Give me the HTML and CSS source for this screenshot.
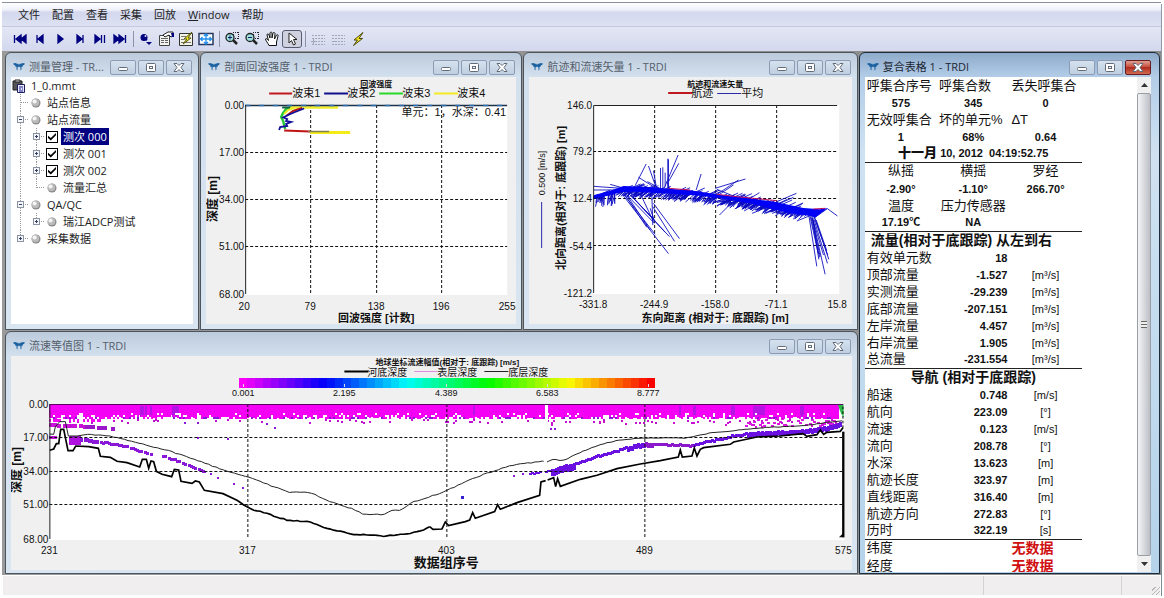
FILE: index.html
```
<!DOCTYPE html>
<html lang="zh-CN">
<head>
<meta charset="utf-8">
<title>1_0.mmt - TRDI</title>
<link rel="stylesheet" href="styles.css">
</head>
<body>
<svg class="defs" aria-hidden="true">
  <defs>
    <clipPath id="plot-clip"><rect x="11" y="-100" width="740" height="560"/></clipPath>
    <symbol id="logo" viewBox="0 0 12 10"><path d="M0 1.500L2.500 1 4.500 2 5 1.200 5.500 2.500H6.500L7 1.200 7.500 2 9.500 1 12 1.500 11 3 10 3.200 9.500 4.700 8.500 4.800V7.500L7.500 8.500V5.500L6 4.500 4.500 5.500V8.500L3.500 7.500V4.800L2.500 4.700 2 3.200 1 3Z" fill="#1c62a0"/></symbol>
    <symbol id="ball" viewBox="0 0 10 10"><circle cx="5" cy="5" r="4.500" fill="#8a8a8a"/><circle cx="4.500" cy="4.500" r="3.800" fill="#bbb"/><circle cx="3.600" cy="3.600" r="2" fill="#f4f4f4"/></symbol>
    <symbol id="tee" viewBox="0 0 16 17"><path d="M8.500 0V17M9 8.500H16" class="dots"/></symbol>
    <symbol id="ell" viewBox="0 0 16 17"><path d="M8.500 0V9M9 8.500H16" class="dots"/></symbol>
    <symbol id="bar" viewBox="0 0 16 17"><path d="M8.500 0V17" class="dots"/></symbol>
    <symbol id="plus" viewBox="0 0 16 17"><path d="M8.500 0V17M9 8.500H16" class="dots"/><rect x="5.500" y="5.500" width="6" height="6" fill="#f4f6fa" stroke="#8b93a0"/><path d="M7 8.500h3M8.500 7v3" stroke="#33416a"/></symbol>
    <symbol id="plusend" viewBox="0 0 16 17"><path d="M8.500 0V9M9 8.500H16" class="dots"/><rect x="5.500" y="5.500" width="6" height="6" fill="#f4f6fa" stroke="#8b93a0"/><path d="M7 8.500h3M8.500 7v3" stroke="#33416a"/></symbol>
    <symbol id="minus" viewBox="0 0 16 17"><path d="M8.500 0V17M9 8.500H16" class="dots"/><rect x="5.500" y="5.500" width="6" height="6" fill="#f4f6fa" stroke="#8b93a0"/><path d="M7 8.500h3" stroke="#33416a"/></symbol>
    <symbol id="wmin" viewBox="0 0 12 9"><rect x="1.500" y="4.500" width="9" height="3" rx="1" fill="#fff" stroke="#626b78"/></symbol>
    <symbol id="wmax" viewBox="0 0 12 9"><rect x="1.500" y=".5" width="9" height="8" rx="1" fill="#fff" stroke="#626b78"/><rect x="4.500" y="3.500" width="3" height="2" fill="#fff" stroke="#626b78"/></symbol>
    <symbol id="wclose" viewBox="0 0 12 9"><path d="M1 .5H4L6 2.500 8 .5H11L8 4.500 11 8.500H8L6 6.500 4 8.500H1L4 4.500Z" fill="#fff" stroke="#626b78"/></symbol>
    <symbol id="mag" viewBox="0 0 16 16"><path d="M9 1.500h6M9 7.500h6M9.500 1v6M14.500 1v7" stroke="#222" stroke-dasharray="1 1" fill="none"/><path d="M9 9l4 4" stroke="#222" stroke-width="2.500"/><circle cx="6" cy="6.500" r="4" fill="#9fe0dc" stroke="#222" stroke-width="1.300"/></symbol>
    <symbol id="bolt" viewBox="0 0 16 16"><path d="M13 1.500L4 9H7.500L3.500 14.500 12.500 7.500H9Z" fill="#ffee20" stroke="#4a4a10"/></symbol>
  </defs>
</svg>
<div class="app">
  <nav class="menu">
    <button>文件</button><button>配置</button><button>查看</button><button>采集</button><button>回放</button><button><u>W</u>indow</button><button>帮助</button>
  </nav>
  <div class="tools">
    <button aria-label="首组"><svg viewBox="0 0 16 16"><path d="M2.500 4v8M9 4L4 8l5 4ZM14 4L9 8l5 4Z" class="navy"/></svg></button>
    <button aria-label="上一组"><svg viewBox="0 0 16 16"><path d="M5 4v8M11 4L6 8l5 4Z" class="navy"/></svg></button>
    <button aria-label="播放"><svg viewBox="0 0 16 16"><path d="M6 4l5 4-5 4Z" class="navy"/></svg></button>
    <button aria-label="下一组"><svg viewBox="0 0 16 16"><path d="M11 4v8M5 4l5 4-5 4Z" class="navy"/></svg></button>
    <button aria-label="暂停"><svg viewBox="0 0 16 16"><path d="M3 4l5 4-5 4ZM9.500 4v8M12.500 4v8" class="navy"/></svg></button>
    <button aria-label="末组"><svg viewBox="0 0 16 16"><path d="M13.500 4v8M2 4l5 4-5 4ZM7 4l5 4-5 4Z" class="navy"/></svg></button>
    <i class="sep"></i>
    <button aria-label="标记"><svg viewBox="0 0 16 16"><circle cx="6" cy="6.500" r="3.500" fill="#000080"/><path d="M6 7l3 2" stroke="#000080" stroke-width="2"/><path d="M8 11h6l-3 3Z" fill="#000080"/><circle cx="7.500" cy="5" r="1" fill="#dfe4f5"/></svg></button>
    <button aria-label="属性"><svg viewBox="0 0 16 16"><path d="M1.500 4.500h10v10h-10Z" fill="#f2f2ee" stroke="#444"/><path d="M3 7.500h7M3 9.500h3m1 0h3M3 11.500h3m1 0h3" stroke="#666"/><path d="M5 4l5-3h5v4l-2 1-2-2-4 2Z" fill="#fff" stroke="#222"/><path d="M13 2h3v4h-2Z" fill="#000080"/></svg></button>
    <button aria-label="重新处理"><svg viewBox="0 0 16 16"><path d="M1.500 2.500h13v12h-13Z" fill="#f4f4e6" stroke="#333"/><path d="M3 5.500h5M3 8.500h3M3 11.500h10" stroke="#777"/><path d="M14 1L6 8h3L5 13l8-6h-3Z" fill="#ffee20" stroke="#555510"/></svg></button>
    <button aria-label="适合窗口"><svg viewBox="0 0 16 16"><path d="M1 2.500h14v11H1Z" fill="#fff" stroke="#26395f" stroke-width="1.500"/><path d="M8 3v10M2.500 8h11M6 5l2-2 2 2M6 11l2 2 2-2M4.500 6l-2 2 2 2M11.500 6l2 2-2 2" fill="none" stroke="#208ee8" stroke-width="1.300"/></svg></button>
    <i class="sep"></i>
    <button aria-label="放大"><svg viewBox="0 0 16 16"><use href="#mag"/><path d="M4 6.500h4M6 4.500v4" stroke="#10206a"/></svg></button>
    <button aria-label="缩小"><svg viewBox="0 0 16 16"><use href="#mag"/><path d="M4 6.500h4" stroke="#10206a"/></svg></button>
    <button aria-label="平移"><svg viewBox="0 0 16 16"><path d="M5 14.500C4 12 1.500 9.500 1.500 8c1-1 2 0 3 1.500L3 4c0-1.500 1.500-1.500 2 0l1 3V2c.5-1.500 2-1 2 0v5l1-5c.5-1 2-.5 2 .5L10.500 8l2-4c1-1 2 0 1.500 1L12.500 11v3.500Z" fill="#fff" stroke="#111"/></svg></button>
    <button class="on" aria-label="选择"><svg viewBox="0 0 16 16"><path d="M5 2v10l2.500-2.500L9.500 14l2-1L9.500 8.500H13Z" fill="#fff" stroke="#222"/></svg></button>
    <i class="sep"></i>
    <button aria-label="网格一"><svg viewBox="0 0 16 16"><path d="M2 4.500h13M2 7.500h13M2 10.500h13M2 13.500h13" class="gray"/><path d="M3.500 8v5M1 10.500h5" stroke="#a2a6b6"/></svg></button>
    <button aria-label="网格二"><svg viewBox="0 0 16 16"><path d="M2 4.500h13M2 7.500h13M2 10.500h13M2 13.500h13" class="gray"/><path d="M2 10.500h5" stroke="#a2a6b6"/></svg></button>
    <button aria-label="采集"><svg viewBox="0 0 16 16"><use href="#bolt"/></svg></button>
  </div>
  <main class="desk">
    <section class="win">
      <header><svg class="logo"><use href="#logo"/></svg><h2>测量管理 - TR...</h2><span class="ctl"><button aria-label="最小化"><svg><use href="#wmin"/></svg></button><button aria-label="最大化"><svg><use href="#wmax"/></svg></button><button aria-label="关闭"><svg><use href="#wclose"/></svg></button></span></header>
      <ul class="tree">
        <li><svg class="doc" viewBox="0 0 14 14"><path d="M1 2h9v9H1Z" fill="#555" stroke="#222"/><path d="M3 1h5v2H3Z" fill="#ddd" stroke="#222"/><path d="M5.500 5.500h7v8h-7Z" fill="#e8eaff" stroke="#1c1c5a"/><path d="M7 8h4M7 10h2m1 0h1M7 12h4" stroke="#1c1c8a"/></svg><span>1_0.mmt</span></li>
        <li><svg><use href="#tee"/></svg><svg class="ball"><use href="#ball"/></svg><span>站点信息</span></li>
        <li><button aria-label="折叠"><svg><use href="#minus"/></svg></button><svg class="ball"><use href="#ball"/></svg><span>站点流量</span></li>
        <li><svg><use href="#bar"/></svg><button aria-label="展开"><svg><use href="#plus"/></svg></button><input type="checkbox" id="t0" checked><label for="t0" class="sel">测次 000</label></li>
        <li><svg><use href="#bar"/></svg><button aria-label="展开"><svg><use href="#plus"/></svg></button><input type="checkbox" id="t1" checked><label for="t1">测次 001</label></li>
        <li><svg><use href="#bar"/></svg><button aria-label="展开"><svg><use href="#plus"/></svg></button><input type="checkbox" id="t2" checked><label for="t2">测次 002</label></li>
        <li><svg><use href="#bar"/></svg><svg><use href="#ell"/></svg><svg class="ball"><use href="#ball"/></svg><span>流量汇总</span></li>
        <li><button aria-label="折叠"><svg><use href="#minus"/></svg></button><svg class="ball"><use href="#ball"/></svg><span>QA/QC</span></li>
        <li><svg><use href="#bar"/></svg><button aria-label="展开"><svg><use href="#plusend"/></svg></button><svg class="ball"><use href="#ball"/></svg><span>瑞江ADCP测试</span></li>
        <li><button aria-label="展开"><svg><use href="#plusend"/></svg></button><svg class="ball"><use href="#ball"/></svg><span>采集数据</span></li>
      </ul>
    </section>
    <section class="win">
      <header><svg class="logo"><use href="#logo"/></svg><h2>剖面回波强度 1 - TRDI</h2><span class="ctl"><button aria-label="最小化"><svg><use href="#wmin"/></svg></button><button aria-label="最大化"><svg><use href="#wmax"/></svg></button><button aria-label="关闭"><svg><use href="#wclose"/></svg></button></span></header>
      <svg class="chart" id="echo" viewBox="206 77 310 247">
        <rect x="245" y="105" width="262" height="190" fill="#fff"/>
        <path class="grid" d="M310.500 105V294M376.500 105V294M441.500 105V294M245 152.500H507M245 199.500H507M245 246.500H507"/>
        <g fill="none" stroke-width="1.500">
          <path d="M292 107L286 109 283 113 281 117 283 121 284 125 285 129" stroke="#28c838" stroke-width="2.500"/>
          <path d="M290 107.500H338" stroke="#f0ec28" stroke-width="2.500"/>
          <path d="M282 107.500H290" stroke="#156040" stroke-width="2"/>
          <path d="M294 108L288 110 284 114" stroke="#f0ec28" stroke-width="2"/>
          <path d="M302 108L293 111 286 116" stroke="#b01818" stroke-width="2"/>
          <path d="M304 108.500L295 112 288 115 283 117.500 287 119 286 121 291 122 286 124 287 126 280 127 279 130" stroke="#10109a" stroke-width="1.800"/>
          <path d="M284 130.500L310 131.500" stroke="#c01414" stroke-width="2"/>
          <path d="M310 132.500H350" stroke="#f4ec18" stroke-width="3"/>
          <path d="M308 131.500H329" stroke="#84804c"/>
          <path d="M245 105.500H507" stroke="#1b3146" stroke-width="1.500"/>
          <path d="M245 105.500H507" stroke="#2d6db0" stroke-dasharray="5 9"/>
        </g>
        <path d="M245.500 105V294" class="axis"/>
        <text x="376" y="87" class="t8 mid">回波强度</text>
        <g stroke-width="2"><path d="M269 93.500h23" stroke="#c01820"/><path d="M324 93.500h24" stroke="#10108c"/><path d="M379 93.500h24" stroke="#28d828"/><path d="M434 93.500h24" stroke="#f4ea20"/></g>
        <text x="292" y="97" class="t11">波束1</text><text x="347" y="97" class="t11">波束2</text><text x="402" y="97" class="t11">波束3</text><text x="457" y="97" class="t11">波束4</text>
        <text x="506" y="116" class="t11 end">单元：1，水深：0.41</text>
        <g class="t10 end"><text x="244" y="109">0.00</text><text x="244" y="156">17.00</text><text x="244" y="203">34.00</text><text x="244" y="250">51.00</text><text x="244" y="298">68.00</text></g>
        <g class="t10 mid"><text x="244" y="310">20</text><text x="310" y="310">79</text><text x="376" y="310">138</text><text x="441" y="310">196</text><text x="507" y="310">255</text></g>
        <text x="376" y="322" class="b11 mid">回波强度 [计数]</text>
        <text class="b12 mid" transform="translate(217 199) rotate(-90)">深度 [m]</text>
      </svg>
    </section>
    <section class="win">
      <header><svg class="logo"><use href="#logo"/></svg><h2>航迹和流速矢量 1 - TRDI</h2><span class="ctl"><button aria-label="最小化"><svg><use href="#wmin"/></svg></button><button aria-label="最大化"><svg><use href="#wmax"/></svg></button><button aria-label="关闭"><svg><use href="#wclose"/></svg></button></span></header>
      <svg class="chart" viewBox="529 77 322 247">
        <rect x="593" y="105" width="246" height="189" fill="#fff"/>
        <path class="grid" d="M654.500 105V293M715.500 105V293M776.500 105V293M593 151.500H838M593 198.500H838M593 245.500H838"/>
        <g transform="translate(590 140) scale(.3333)"><g id="track" clip-path="url(#plot-clip)"></g></g>
        <path d="M837 105.500H593.500V293" class="axis"/>
        <text x="715" y="87" class="t8 mid">航迹和流速矢量</text>
        <path d="M668 93h24" stroke="#c01820" stroke-width="2"/><path d="M717 93.500h24" stroke="#2a2aa8"/>
        <text x="691" y="97" class="t11">航迹</text><text x="741" y="97" class="t11">平均</text>
        <g class="t10 end"><text x="592" y="109">146.0</text><text x="592" y="155">79.2</text><text x="592" y="202">12.4</text><text x="592" y="250">-54.4</text><text x="592" y="297">-121.2</text></g>
        <g class="t10 mid"><text x="593" y="308">-331.8</text><text x="654" y="308">-244.9</text><text x="715" y="308">-158.0</text><text x="776" y="308">-71.1</text><text x="837" y="308">15.8</text></g>
        <text x="715" y="322" class="b11 mid">东向距离 (相对于: 底跟踪) [m]</text>
        <text class="b11 mid" transform="translate(565 198) rotate(-90)">北向距离(相对于: 底跟踪) [m]</text>
        <text class="t9 mid" transform="translate(545 173) rotate(-90)">0.500 [m/s]</text>
        <path d="M541.500 202V248" stroke="#2a2aa8"/>
      </svg>
    </section>
    <section class="win wide">
      <header><svg class="logo"><use href="#logo"/></svg><h2>流速等值图 1 - TRDI</h2><span class="ctl"><button aria-label="最小化"><svg><use href="#wmin"/></svg></button><button aria-label="最大化"><svg><use href="#wmax"/></svg></button><button aria-label="关闭"><svg><use href="#wclose"/></svg></button></span></header>
      <svg class="chart" viewBox="11 356 840 214">
        <rect x="49" y="404" width="795" height="136" fill="#fff"/>
        <g id="bar-scale" shape-rendering="crispEdges"></g>
        <g transform="translate(0 330) scale(.3333)">
          <g id="cells" shape-rendering="crispEdges"></g>
          <path d="M2513 225H2530V262L2522 250Z" fill="#2db84a"/>
          <path id="upper" class="thin" d=""/>
          <path id="bed" class="thick" d=""/>
          <path d="M2516 622L2530 608V622Z"/>
          <path d="M2529 305V622" stroke="#000" stroke-width="7"/>
          <path d="M2528 230V300" stroke="#000" stroke-width="3" stroke-dasharray="8 6"/>
        </g>
        <path class="grid" d="M247.500 404V538M446.500 404V538M644.500 404V538M49 437.500H843M49 471.500H843M49 504.500H843"/>
        <path d="M49 404.500H843" stroke="#5a0060" stroke-width="1"/>
        <path d="M49.500 404V539" class="axis"/>
        <text x="447" y="365" class="t8 mid">地球坐标流速幅值(相对于: 底跟踪) [m/s]</text>
        <path d="M344 371.500h24" stroke="#000" stroke-width="2"/><path d="M414 371.500h23" stroke="#e08be0"/><path d="M484 371.500h24" stroke="#222"/>
        <text x="367" y="376" class="t10c">河底深度</text><text x="437" y="376" class="t10c">表层深度</text><text x="508" y="376" class="t10c">底层深度</text>
        <g class="t9 mid"><text x="243" y="396">0.001</text><text x="344" y="396">2.195</text><text x="446" y="396">4.389</text><text x="547" y="396">6.583</text><text x="648" y="396">8.777</text></g>
        <g class="t10 end"><text x="48" y="408">0.00</text><text x="48" y="441">17.00</text><text x="48" y="475">34.00</text><text x="48" y="508">51.00</text><text x="48" y="543">68.00</text></g>
        <g class="t10 mid"><text x="49" y="554">231</text><text x="247" y="554">317</text><text x="446" y="554">403</text><text x="644" y="554">489</text><text x="843" y="554">575</text></g>
        <text x="446" y="567" class="b13 mid">数据组序号</text>
        <text class="b12 mid" transform="translate(21 470) rotate(-90)">深度 [m]</text>
      </svg>
    </section>
    <section class="win active">
      <header><svg class="logo"><use href="#logo"/></svg><h2>复合表格 1 - TRDI</h2><span class="ctl"><button aria-label="最小化"><svg><use href="#wmin"/></svg></button><button aria-label="最大化"><svg><use href="#wmax"/></svg></button><button class="close" aria-label="关闭"><svg><use href="#wclose"/></svg></button></span></header>
      <div class="pane">
        <div class="sheet"><table>
          <tbody class="trio">
            <tr class="l"><th>呼集合序号</th><th>呼集合数</th><th>丢失呼集合</th></tr>
            <tr><td>575</td><td>345</td><td>0</td></tr>
            <tr class="l"><th>无效呼集合</th><th>坏的单元%</th><th>ΔT</th></tr>
            <tr><td>1</td><td>68%</td><td>0.64</td></tr>
            <tr><td colspan="3"><b>十一月</b> 10, 2012&nbsp; 04:19:52.75</td></tr>
          </tbody>
          <tbody class="trio">
            <tr><th>纵摇</th><th>横摇</th><th>罗经</th></tr>
            <tr><td>-2.90°</td><td>-1.10°</td><td>266.70°</td></tr>
            <tr><th>温度</th><th>压力传感器</th><th></th></tr>
            <tr><td>17.19℃</td><td>NA</td><td></td></tr>
          </tbody>
          <tbody class="list">
            <tr><th colspan="3" class="h hl">流量(相对于底跟踪) 从左到右</th></tr>
            <tr><th>有效单元数</th><td>18</td><td></td></tr>
            <tr><th>顶部流量</th><td>-1.527</td><td>[m³/s]</td></tr>
            <tr><th>实测流量</th><td>-29.239</td><td>[m³/s]</td></tr>
            <tr><th>底部流量</th><td>-207.151</td><td>[m³/s]</td></tr>
            <tr><th>左岸流量</th><td>4.457</td><td>[m³/s]</td></tr>
            <tr><th>右岸流量</th><td>1.905</td><td>[m³/s]</td></tr>
            <tr><th>总流量</th><td>-231.554</td><td>[m³/s]</td></tr>
          </tbody>
          <tbody class="list">
            <tr><th colspan="3" class="h">导航 (相对于底跟踪)</th></tr>
            <tr><th>船速</th><td>0.748</td><td>[m/s]</td></tr>
            <tr><th>航向</th><td>223.09</td><td>[°]</td></tr>
            <tr><th>流速</th><td>0.123</td><td>[m/s]</td></tr>
            <tr><th>流向</th><td>208.78</td><td>[°]</td></tr>
            <tr><th>水深</th><td>13.623</td><td>[m]</td></tr>
            <tr><th>航迹长度</th><td>323.97</td><td>[m]</td></tr>
            <tr><th>直线距离</th><td>316.40</td><td>[m]</td></tr>
            <tr><th>航迹方向</th><td>272.83</td><td>[°]</td></tr>
            <tr><th>历时</th><td>322.19</td><td>[s]</td></tr>
          </tbody>
          <tbody class="none">
            <tr><th colspan="2">纬度</th><td>无数据</td></tr>
            <tr><th colspan="2">经度</th><td>无数据</td></tr>
          </tbody>
        </table></div>
        <div class="scroll">
          <button aria-label="向上"><svg viewBox="0 0 7 4"><path d="M0 4L3.500 0 7 4Z"/></svg></button>
          <div class="thumb"><i></i></div>
          <button aria-label="向下"><svg viewBox="0 0 7 4"><path d="M0 0L3.500 4 7 0Z"/></svg></button>
        </div>
      </div>
    </section>
  </main>
  <footer class="status"><span></span><span></span><span></span></footer>
</div>
<script src="charts.js"></script>
</body>
</html>
```
FILE: styles.css
```
* { box-sizing: border-box; }
body { margin: 0; background: #fff; font: 11px/16px "Open Sans", "Noto Sans CJK SC", sans-serif; color: #222; }
button { font: inherit; color: inherit; background: none; border: 0; padding: 0; margin: 0; }
svg { display: block; }
.defs { position: absolute; width: 0; height: 0; }
.dots { fill: none; stroke: #9a9a9a; stroke-dasharray: 1 1; }
.app { display: flex; flex-direction: column; height: 100vh; min-height: 590px; padding: 2px; background: linear-gradient(#fff 2px, #8e9aa6 2px, #7b8a94) content-box, #fff; }
.app > * { margin: 0 1px 0 0; }
.menu { flex: none; display: flex; gap: 12px; height: 25px; padding: 1px 16px 0; border-top: 1px solid #88929c; border-bottom: 1px solid #c3c8da; background: linear-gradient(#fff, #eff1fa 30%, #d3d8ee 40%, #dde1f2); }
.tools { flex: none; display: flex; align-items: center; height: 24px; padding: 0 8px; background: linear-gradient(#e3e6f4, #d3d8ee); }
.tools button { flex: none; display: grid; place-items: center; width: 20px; height: 18px; }
.tools svg { width: 16px; height: 16px; }
.tools .on { border: 1px solid #555c70; border-radius: 3px; background: #cfd2de; }
.sep { flex: none; width: 1px; height: 16px; margin: 0 2px 0 3px; background: #8d93a6; }
.navy { fill: #000080; stroke: #000080; stroke-width: 1.300; }
.gray { stroke: #a2a6b6; stroke-dasharray: 2 1; }
.desk { flex: 1; min-height: 0; display: grid; grid-template-columns: 194fr 322fr 334fr 301fr; grid-template-rows: 278fr 243fr; gap: 1px; padding: 1px 1px 1px 3px; background: linear-gradient(90deg, #9a9a9a, #8b8b8b); }
.win { min-width: 0; min-height: 0; display: flex; flex-direction: column; padding: 0 5px 5px; border: 1px solid #4c545e; border-radius: 6px 6px 0 0; background: linear-gradient(#bccbdc, #d3e0ee 24px, #d9e5f1); }
.wide { grid-column: 1 / 4; grid-row: 2; padding-bottom: 3px; }
.active { grid-column: 4; grid-row: 1 / 3; padding: 0 8px 1px 5px; border-color: #1c2c3c; background: linear-gradient(#8fabcb, #b3cde8 24px, #cfe2f2 100px, #b4d3ea); }
.win header { flex: none; display: flex; align-items: center; gap: 4px; height: 24px; padding: 4px 1px 0 2px; color: #55606c; }
.active header { color: #1c2632; padding-right: 0; }
.logo { flex: none; width: 12px; height: 10px; }
h2 { flex: 1; min-width: 0; margin: 0; font: inherit; white-space: nowrap; }
.ctl { display: flex; gap: 2px; }
.ctl button { display: grid; place-items: center; width: 26px; height: 15px; border: 1px solid #8c9cb4; border-radius: 2px; background: linear-gradient(#d5e1ee, #bfcfe1); }
.ctl svg { width: 12px; height: 9px; }
.ctl .close { border-color: #6a1c1c; background: linear-gradient(#e0a094, #c85040 45%, #b02c20 50%, #d06a50); }
.tree { flex: 1; margin: 0; padding: 0 1px; list-style: none; background: #fff; line-height: 17px; }
.tree li { display: flex; align-items: center; height: 17px; white-space: nowrap; }
.tree svg { flex: none; width: 16px; height: 17px; }
.tree .ball { width: 10px; height: 10px; margin: 0 6px 0 3px; }
.tree .doc { width: 14px; height: 14px; margin-right: 5px; }
.tree .sel { padding: 0 2px; margin-left: -2px; background: #000080; color: #fff; }
.tree input { appearance: none; flex: none; display: grid; place-items: center; width: 12px; height: 12px; margin: 0 5px 0 2px; border: 1px solid #000; background: #fff; }
.tree input:checked::before { content: ""; width: 8px; height: 8px; background: #000; clip-path: polygon(0 40%, 35% 70%, 100% 5%, 100% 35%, 35% 100%, 0 70%); }
.chart { flex: 1; width: 100%; min-height: 0; background: #f0f0f0; font-family: "Liberation Sans", "Noto Sans CJK SC", sans-serif; fill: #111; }
.grid { fill: none; stroke: #111; stroke-dasharray: 3 2; }
.axis { fill: none; stroke: #222; stroke-width: 1; }
.thin { fill: none; stroke: #222; stroke-width: 3; }
.thick { fill: none; stroke: #000; stroke-width: 5; }
.mid { text-anchor: middle; }
.end { text-anchor: end; }
.t8 { font-size: 8px; font-weight: 700; }
.t9 { font-size: 9px; }
.t10, .t10c { font-size: 10px; }
.t11 { font-size: 11px; }
.b11 { font-size: 11px; font-weight: 700; }
.b12 { font-size: 12px; font-weight: 700; }
.b13 { font-size: 13px; font-weight: 700; }
.pane { flex: 1; min-height: 0; display: flex; background: #fff; }
.sheet { flex: 1; overflow: hidden; }
table { width: 217px; table-layout: fixed; border-collapse: collapse; font: 11px/16px "Liberation Sans", "Noto Sans CJK SC", sans-serif; color: #111; }
th, td { height: 17px; padding: 0 2px; white-space: nowrap; text-align: center; }
tbody + tbody { border-top: 1px solid #222; }
tbody + tbody tr:first-child > * { height: 18px; }
th { font-size: 13px; font-weight: 400; }
td { font-weight: 700; }
.l th, .list th, .none th { text-align: left; }
td b { font-size: 13px; }
.list td:nth-child(2) { text-align: right; }
.list td:nth-child(3) { font-weight: 400; }
.list .h { font-size: 14px; font-weight: 700; text-align: center; }
.list .hl { text-align: left; padding-left: 6px; }
.none td { color: #d01010; font-size: 14px; text-align: left; }
.scroll { flex: none; width: 14px; display: flex; flex-direction: column; background: #f0f0f0; }
.scroll button { display: grid; place-items: center; height: 16px; }
.scroll svg { width: 7px; height: 4px; fill: #333; }
.thumb { flex: 1; display: grid; place-items: center; border: 1px solid #9a9ea6; border-radius: 2px; background: linear-gradient(90deg, #f4f4f4, #d8dade 50%, #bcbfc6); }
.thumb i { width: 6px; height: 7px; background: repeating-linear-gradient(#666 0 1px, #eee 1px 3px); }
.status { flex: none; display: grid; grid-template-columns: 983fr 138fr 39fr; height: 21px; border: 1px solid #fff; background: #f0eeee; }
.status span + span { border-left: 1px solid #d4d2d2; }
.status span:last-child { background: repeating-linear-gradient(135deg, transparent 0 2px, #b8b8b8 2px 3px) right bottom / 8px 8px no-repeat; }
```
FILE: charts.js
```
const NS = "http://www.w3.org/2000/svg";
let seed = 7;
const rnd = () => (seed = (seed * 16807) % 2147483647) / 2147483647;
const add = (parent, tag, attrs) => {
  const el = document.createElementNS(NS, tag);
  for (const k in attrs) el.setAttribute(k, attrs[k]);
  parent.appendChild(el);
};
const at = (pts, x) => {
  for (let i = 1; i < pts.length; i++) {
    if (x <= pts[i][0]) {
      const [a, b] = [pts[i - 1], pts[i]];
      return a[1] + (b[1] - a[1]) * (x - a[0]) / (b[0] - a[0]);
    }
  }
  return pts[pts.length - 1][1];
};

// Ship track with velocity vectors
const track = document.getElementById("track");
const mid = [[10, 168], [60, 158], [100, 147], [190, 151], [250, 156], [320, 160], [380, 170], [480, 182], [560, 196], [640, 211], [712, 207]];
let d = "";
for (let i = 0; i < 330; i++) {
  const x = 12 + rnd() * 650, y = at(mid, x), s = x > 380 && rnd() < 0.6 ? 1.5 : 1;
  const len = (8 + rnd() * 24) * s, a = (150 + rnd() * 45) * Math.PI / 180;
  d += `M${x.toFixed(0)} ${(y + 3).toFixed(0)}l${(Math.cos(a) * len).toFixed(0)} ${(-Math.sin(a) * len * 0.5 + (x > 100 ? 14 + rnd() * 8 : 8)).toFixed(0)}`;
}
for (let i = 0; i < 70; i++) {
  const x = 20 + rnd() * 610, y = at(mid, x), len = 12 + rnd() * 26;
  d += `M${x.toFixed(0)} ${y.toFixed(0)}l${len.toFixed(0)} ${(-len * 0.45).toFixed(0)}`;
}
for (let i = 0; i < 26; i++) {
  const x = 20 + rnd() * 55;
  d += `M${x.toFixed(0)} ${(162).toFixed(0)}l${(-12 + rnd() * 14).toFixed(0)} ${(12 + rnd() * 28).toFixed(0)}`;
}
d += "M10 139L110 146M10 150L120 150M60 133L120 150M90 155L235 341M95 155L195 283M100 158L170 262M105 158L180 270M110 165L193 250M120 165L192 238M130 175L238 290M125 168L225 277M188 200L253 304M190 190L268 296M150 160L190 245M185 160L188 255M180 205L192 240M135 137L168 72M145 112L190 140M175 78L197 140M190 92L200 150M211 84V148M218 82V150M225 98V140M233 56V150M235 58V150M222 145L264 45M235 125L266 70M230 125L240 150M172 125L200 140M318 150L333 102M375 145L466 117M378 165L445 120M385 165L430 135M388 225L425 188M380 148L460 180M480 175L508 158M560 185L619 160M570 190L610 172M486 220L540 198M620 243L690 215M712 206L742 228M670 235L712 206";
d += "M656 225L680 379M662 228L688 352M666 230L705 403M668 235L686 358M672 232L713 345M675 235L716 358M672 240L712 370M666 235L690 350M678 240L710 332M660 230L684 340M668 238L700 345";
add(track, "path", { d, fill: "none", stroke: "#0808c0", "stroke-width": 2.6 });
add(track, "path", { d: "M10 166L60 152 100 138 190 142 235 146 300 151 380 163 480 175 560 187 640 204 690 208 712 204 675 233 660 228 600 220 540 206 480 190 400 177 330 167 250 162 200 159 130 155 90 157 50 168 12 174Z", fill: "#0000f4" });
add(track, "path", { d: "M236 145L300 150M380 163L440 170 560 182M670 207L705 205", fill: "none", stroke: "#c01060", "stroke-width": 3 });

// Velocity colour scale
const scale = document.getElementById("bar-scale");
for (let i = 0; i < 52; i++) {
  add(scale, "rect", { x: 239 + i * 8, y: 378, width: 8, height: 10, fill: `hsl(${300 - i * 300 / 51} 100% 49%)` });
}
for (const x of [243, 344, 446, 547, 648]) add(scale, "rect", { x, y: 384, width: 1, height: 3, fill: "#ddd" });

// Velocity cells
const cells = document.getElementById("cells");
const cell = (x, y, w, h, fill) => add(cells, "rect", { x: Math.round(x / 3) * 3, y: Math.round(y / 3) * 3, width: w, height: h, fill });
const M = "#f400f4", P = "#8a18d8", V = "#6a10e0";
cell(147, 225, 2370, 31, M);
[[420, 10], [435, 6], [450, 6], [515, 14], [530, 6], [1420, 6], [2037, 6], [2080, 8], [2193, 10], [2260, 36], [2400, 10], [2405, 6]].forEach(([x, w]) => cell(x, 228, w, 32, "#b414e4"));
for (let x = 147; x < 2515; x += 6) {
  if (rnd() < 0.8) cell(x, 255, 6, rnd() < 0.5 ? 6 : 9, M);
  if (rnd() < 0.55) cell(x, 261, 6, 6, rnd() < 0.3 ? P : M);
  if (rnd() < 0.13) cell(x, 249, 6, 6, "#fff");
  if (rnd() < 0.12) cell(x, 267 + rnd() * 9, 6, 6, "#c010d0");
  if (x < 345 && rnd() < 0.85) cell(x, at([[147, 280], [230, 282], [345, 292]], x), 6, 12, x > 250 ? "#9a18c8" : "#c810d8");
  if (x < 330 && rnd() < 0.4) cell(x, 267, 6, 9, M);
  if (x > 1600 && rnd() < 0.18) cell(x, 270 + rnd() * 18, 6, 6, "#d010d0");
  if (x > 2230 && rnd() < 0.85) cell(x, 264 + rnd() * 22, 9, 6, "#d818e0");
}
cell(1634, 225, 7, 54, "#fff");
cell(147, 318, 24, 9, "#c010d8");
cell(206, 318, 36, 28, "#b010e0");
const left = [[240, 322], [320, 334], [370, 343], [430, 362], [490, 374], [530, 388], [570, 405], [610, 418]];
for (let x = 240; x < 612; x += 6) if (rnd() < 0.85 && !(x > 455 && x < 470)) cell(x, at(left, x) + rnd() * 3, 8, x < 300 ? 12 : 8, P);
[[612, 422], [630, 430], [650, 441], [700, 459], [727, 470], [590, 322], [680, 323], [553, 275], [592, 275], [797, 280], [822, 290], [1540, 435], [1565, 430], [1650, 294], [1662, 294]].forEach(([x, y]) => cell(x, y, 6, 5, P));
cell(1382, 497, 8, 9, "#3020d0");
const right = [[1580, 428], [1640, 420], [1680, 405], [1720, 398], [1790, 372], [1850, 356], [1890, 344], [1930, 336], [1990, 338], [2070, 340], [2140, 325], [2200, 312], [2250, 304], [2350, 300], [2430, 294], [2480, 286], [2526, 274]];
for (let x = 1582; x < 2524; x += 6) {
  if (x < 1640 && rnd() < 0.35) continue;
  const thick = x > 1650 && x < 1722 ? 22 : x < 1650 ? 6 : x > 2240 ? 15 : x > 1880 && x < 1960 ? 14 : 9;
  cell(x, at(right, x) + rnd() * 4, 8, thick, x > 1930 && x < 2080 ? "#8c18cc" : V);
}

// Depth lines
const wob = (pts, amp, step) => {
  let s = `M${pts[0]}`;
  for (let x = pts[0][0] + step; x < pts[pts.length - 1][0]; x += step) s += `L${x} ${(at(pts, x) + (rnd() - 0.5) * amp).toFixed(1)}`;
  return s + `L${pts[pts.length - 1]}`;
};
const line = a => "M" + a.map(p => p.join(" ")).join("L");
document.getElementById("upper").setAttribute("d",
  line([[148, 312], [160, 313], [165, 290], [178, 275], [195, 275], [204, 318], [230, 318], [262, 313]]) +
  wob([[262, 313], [330, 319], [420, 340], [500, 361], [590, 390], [660, 417], [742, 440], [820, 470], [865, 487], [925, 486], [990, 515], [1060, 538], [1090, 553], [1150, 554], [1170, 543], [1200, 540], [1240, 515], [1290, 499], [1330, 487], [1380, 462], [1440, 437], [1500, 417], [1550, 402], [1630, 394]], 3, 11) +
  wob([[1640, 396], [1656, 388], [1690, 392], [1740, 367], [1800, 343], [1865, 329], [1930, 324], [2060, 324], [2130, 309], [2200, 302], [2300, 292], [2400, 288], [2470, 279], [2525, 272]], 2, 9));
document.getElementById("bed").setAttribute("d",
  line([[148, 361], [160, 357], [168, 341], [175, 341], [181, 298], [190, 298], [203, 362], [218, 362], [226, 348], [265, 350], [294, 355], [300, 379], [330, 382], [350, 394], [380, 398], [418, 411], [426, 388], [438, 388], [445, 415], [452, 393], [460, 395], [468, 424], [485, 433], [514, 440], [522, 418], [535, 420], [542, 454], [575, 460], [585, 453], [597, 456], [612, 481], [668, 491], [710, 511]]) +
  wob([[710, 511], [750, 537], [800, 551], [865, 572], [920, 574], [980, 595], [1050, 612], [1110, 616], [1150, 618], [1220, 612], [1260, 604], [1288, 590]], 3, 10) +
  line([[1288, 590], [1298, 598], [1325, 597], [1335, 576], [1345, 587], [1395, 575], [1408, 570], [1417, 548], [1425, 565], [1483, 545], [1492, 524], [1500, 538], [1550, 518], [1618, 496], [1622, 456], [1636, 452]]) +
  line([[1642, 450], [1660, 443], [1666, 470], [1672, 446], [1680, 469], [1740, 448], [1790, 436], [1850, 416], [1920, 402], [1980, 392], [2034, 381], [2040, 360], [2046, 381], [2075, 378], [2082, 354], [2090, 378], [2100, 358], [2110, 353], [2190, 343], [2200, 336], [2270, 321], [2340, 318], [2408, 311], [2420, 319], [2450, 314], [2460, 300], [2470, 313], [2480, 307], [2520, 304], [2528, 293]]));
```
